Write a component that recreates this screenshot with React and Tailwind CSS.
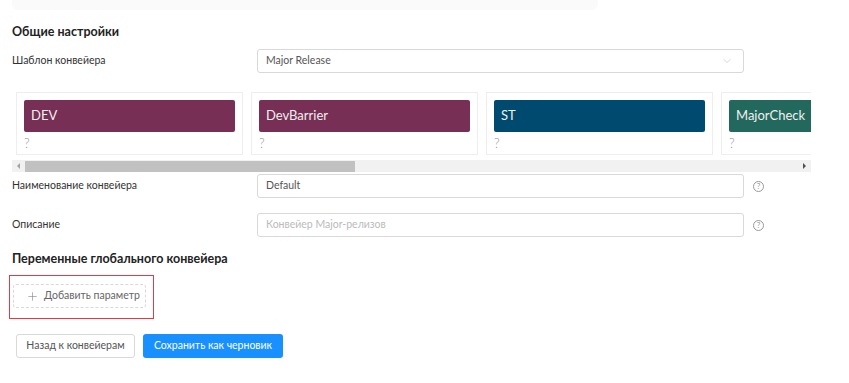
import { ChevronDown, Plus } from 'lucide-react'

const STAGES = [
  { name: 'DEV', color: 'bg-[#772f55]' },
  { name: 'DevBarrier', color: 'bg-[#772f55]' },
  { name: 'ST', color: 'bg-[#004a6f]' },
  { name: 'MajorCheck', color: 'bg-[#23685d]' },
]

export default function App() {
  return (
    <div className="w-[849px] h-[383px] bg-white text-[10.5px] text-[#333] font-['Lato','Noto_Sans',sans-serif] overflow-hidden">
      <div className="ml-3 w-[586px] h-[10px] bg-[#fafafa] rounded-b-md" />

      <h3 className="ml-3 mt-[15px] text-[12.5px] font-bold text-[#222] leading-[14px]">Общие настройки</h3>

      <Row label="Шаблон конвейера" className="mt-[10px]">
        <div className="w-[487px] h-[24px] border border-[#d9d9d9] rounded-[3px] flex items-center justify-between px-2 text-[#555]">
          <span>Major Release</span>
          <ChevronDown size={12} strokeWidth={1.2} className="text-[#bbb] mr-0.5" />
        </div>
      </Row>

      <div className="ml-3 mt-[19px] w-[799px]">
        <div className="flex gap-2 pl-1 overflow-hidden">
          {STAGES.map((s) => (
            <div key={s.name} className="shrink-0 w-[227px] h-[63px] border border-[#eee] bg-white p-[7px]">
              <div className={`${s.color} h-[32px] rounded-[2px] px-[7px] flex items-center text-[#f0f0f0] text-[13px]`}>
                {s.name}
              </div>
              <p className="text-[#999] text-[13px] font-light leading-[14px] mt-[4px]">?</p>
            </div>
          ))}
        </div>
        <div className="mt-[5px] h-[12px] bg-[#f1f1f1] flex items-center">
          <span className="w-[13px] flex justify-center">
            <span className="w-0 h-0 border-y-[3px] border-y-transparent border-r-[3px] border-r-[#a3a3a3]" />
          </span>
          <div className="w-[330px] h-[11px] bg-[#c1c1c1]" />
          <div className="flex-1" />
          <span className="w-[13px] flex justify-center">
            <span className="w-0 h-0 border-y-[3px] border-y-transparent border-l-[3px] border-l-[#505050]" />
          </span>
        </div>
      </div>

      <Row label="Наименование конвейера" className="mt-[2px]" help>
        <div className="w-[487px] h-[24px] border border-[#d9d9d9] rounded-[3px] flex items-center px-2 text-[#555]">Default</div>
      </Row>

      <Row label="Описание" className="mt-[15px]" help>
        <div className="w-[487px] h-[24px] border border-[#d9d9d9] rounded-[3px] flex items-center px-2 text-[#bbb]">Конвейер Major-релизов</div>
      </Row>

      <h3 className="ml-3 mt-[15px] text-[12.5px] font-bold text-[#222] leading-[14px]">Переменные глобального конвейера</h3>

      <div className="ml-[9px] mt-[9px] w-[145px] h-[44px] border border-[#e63946] pl-[3px] pt-[8px]">
        <div className="w-[133px] h-[24px] border border-dashed border-[#d9d9d9] rounded-[3px] flex items-center gap-[5px] px-3 text-[#666] whitespace-nowrap">
          <Plus size={13} strokeWidth={1.2} className="text-[#888] shrink-0" />
          <span>Добавить параметр</span>
        </div>
      </div>

      <div className="ml-4 mt-[15px] flex gap-2">
        <button className="h-[24px] w-[119px] border border-[#d9d9d9] rounded-[3px] bg-white text-[#555] whitespace-nowrap">Назад к конвейерам</button>
        <button className="h-[24px] w-[140px] rounded-[3px] bg-[#1890ff] text-white whitespace-nowrap">Сохранить как черновик</button>
      </div>
    </div>
  )
}

function Row({ label, children, className = '', help }) {
  return (
    <div className={`flex items-center ${className}`}>
      <span className="w-[257px] pl-3 text-[#333]">{label}</span>
      {children}
      {help && (
        <span className="ml-[9px] w-[11px] h-[11px] rounded-full border border-[#999] text-[#999] text-[8px] leading-none flex items-center justify-center">?</span>
      )}
    </div>
  )
}
